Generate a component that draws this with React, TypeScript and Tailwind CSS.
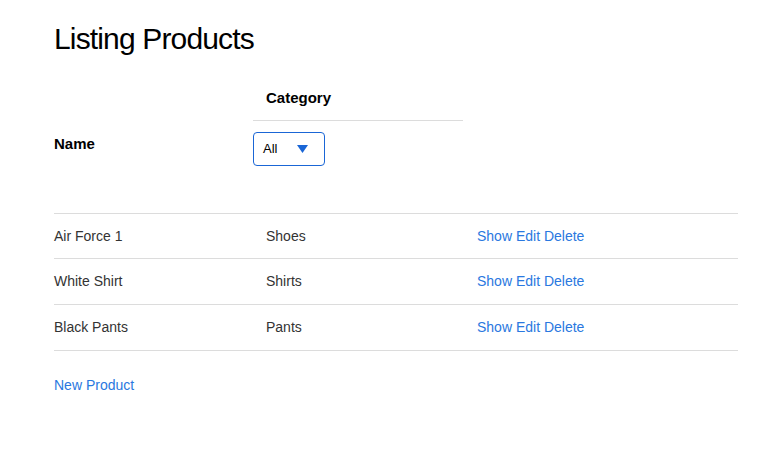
import React from 'react';

export default function App() {
  const products = [
    { name: 'Air Force 1', category: 'Shoes' },
    { name: 'White Shirt', category: 'Shirts' },
    { name: 'Black Pants', category: 'Pants' },
  ];

  return (
    <div className="min-h-screen bg-white font-['Liberation_Sans',Arial,sans-serif] text-[#222]">
      <div className="pl-[54px] pt-[21px] w-[738px]">
        <h1 className="text-[30px] leading-[36px] tracking-[-0.85px] text-black">Listing Products</h1>

        {/* Header */}
        <div className="grid grid-cols-[199px_210px_1fr] mt-[23px]">
          <div className="flex items-center pb-[5px]">
            <span className="text-[15px] font-bold text-black">Name</span>
          </div>
          <div className="flex flex-col">
            <div className="h-[41px] flex items-center pl-[13px] pb-[4px] border-b border-[#dcdcdc]">
              <span className="text-[15px] font-bold text-black">Category</span>
            </div>
            <div className="mt-[11px] mb-[47px]">
              <div className="w-[72px] h-[34px] border border-[#1a66d6] rounded-[4px] flex items-center pl-[9px] pr-[16px] justify-between">
                <span className="text-[13px] text-black">All</span>
                <svg width="11" height="8" viewBox="0 0 11 8">
                  <path d="M0 0 L11 0 L5.5 8 Z" fill="#1a66d6" />
                </svg>
              </div>
            </div>
          </div>
          <div />
        </div>

        {/* Rows */}
        <div className="border-t border-[#dcdcdc]">
          {products.map((p, i) => (
            <div
              key={i}
              className={
                i === 0
                  ? 'grid grid-cols-[212px_211px_1fr] h-[45px] items-center border-b border-[#dcdcdc] text-[14px] text-[#333]'
                  : 'grid grid-cols-[212px_211px_1fr] h-[46px] items-center border-b border-[#dcdcdc] text-[14px] text-[#333]'
              }
            >
              <span>{p.name}</span>
              <span>{p.category}</span>
              <span className="text-[#2a78e0]">
                <a>Show</a> <a>Edit</a> <a>Delete</a>
              </span>
            </div>
          ))}
        </div>

        <div className="mt-[24px] text-[14px] text-[#2a78e0]">
          <a>New Product</a>
        </div>
      </div>
    </div>
  );
}
